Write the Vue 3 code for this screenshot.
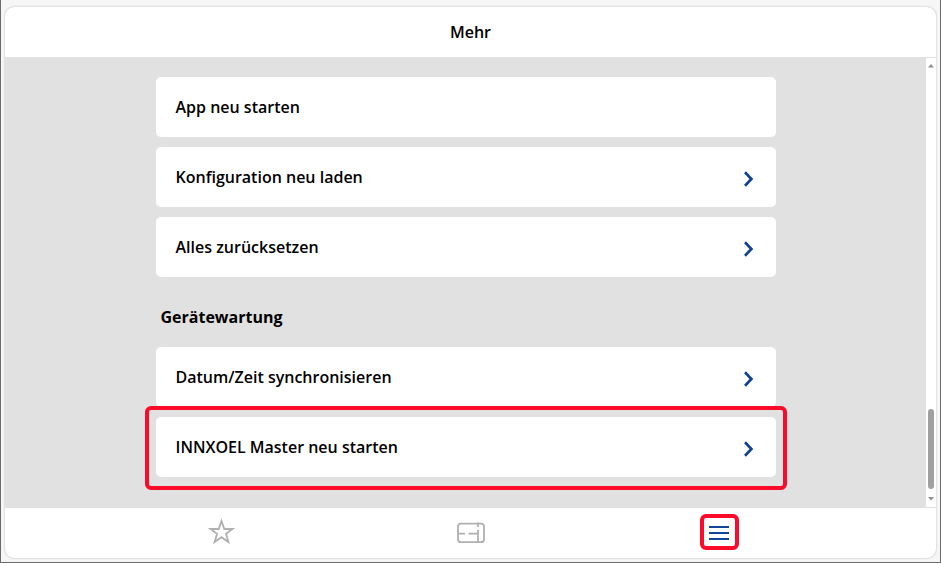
<script setup>
import { ref } from "vue";

const activeTab = ref("more");

const sections = [
  {
    title: "",
    items: [
      { id: "restart-app", label: "App neu starten", arrow: false },
      { id: "reload-config", label: "Konfiguration neu laden", arrow: true },
      { id: "reset", label: "Alles zurücksetzen", arrow: true }
    ]
  },
  {
    title: "Gerätewartung",
    items: [
      { id: "sync-time", label: "Datum/Zeit synchronisieren", arrow: true },
      { id: "restart-master", label: "INNXOEL Master neu starten", arrow: true, marked: true }
    ]
  }
];
</script>

<template>
  <div class="window">
    <div class="panel">
      <header class="header">
        <h1>Mehr</h1>
      </header>

      <div class="body">
        <main class="content">
          <section v-for="section in sections" :key="section.title" class="section">
            <h2 v-if="section.title">{{ section.title }}</h2>
            <button
              v-for="item in section.items"
              :key="item.id"
              type="button"
              class="card"
              :class="{ marked: item.marked }"
            >
              <span>{{ item.label }}</span>
              <svg v-if="item.arrow" class="chevron" width="12" height="16" viewBox="0 0 12 16">
                <path d="M1 1.3L7.4 8L1 14.7" />
              </svg>
            </button>
          </section>
        </main>

        <div class="scrollbar">
          <svg width="6" height="4" viewBox="0 0 6 4"><path d="M0 3.5L3 0L6 3.5Z" /></svg>
          <div class="track">
            <div class="thumb"></div>
          </div>
          <svg width="6" height="4" viewBox="0 0 6 4"><path d="M0 0L3 3.5L6 0Z" /></svg>
        </div>
      </div>

      <nav class="tabs">
        <button type="button" class="tab" aria-label="Favoriten" @click="activeTab = 'favorites'">
          <svg width="28" height="28" viewBox="0 0 28 28">
            <path d="M14.5 3L17.3 11H25.4L19 15.8L21.4 24L14.5 19.2L7.6 24L10 15.8L3.6 11H11.7Z" />
          </svg>
        </button>
        <button type="button" class="tab" aria-label="Räume" @click="activeTab = 'rooms'">
          <svg width="30" height="28" viewBox="0 0 30 28">
            <rect x="3" y="5.6" width="26" height="18.6" rx="3" />
            <path d="M3 15.6H10M13.5 15.6H23M23 12V24M23 4.6V9" />
          </svg>
        </button>
        <button
          type="button"
          class="tab marked"
          :class="{ active: activeTab === 'more' }"
          aria-label="Mehr"
          @click="activeTab = 'more'"
        >
          <svg width="24" height="20" viewBox="0 0 24 20">
            <path d="M1 5H21M1 11H21M1 17H21" />
          </svg>
        </button>
      </nav>
    </div>
  </div>
</template>

<style>
body {
  margin: 0;
}
</style>

<style scoped>
.window {
  box-sizing: border-box;
  min-height: 100vh;
  display: flex;
  padding: 7px 4px 4px;
  border: 1px solid #6b6b6b;
  border-top: none;
  background: #f6f6f6;
  font-family: "Open Sans", "Noto Sans", sans-serif;
  font-size: 16px;
  color: #000;
}

.panel {
  flex: 1;
  display: flex;
  flex-direction: column;
  overflow: hidden;
  border-radius: 9px;
  background: #fff;
  box-shadow: 0 0 2px rgba(0, 0, 0, 0.3);
}

.header {
  display: flex;
  align-items: center;
  justify-content: center;
  height: 50px;
}

.header h1 {
  margin: 0;
  font-size: 16px;
  font-weight: 600;
}

.body {
  flex: 1;
  display: flex;
  background: #e1e1e1;
}

.content {
  flex: 1;
  display: flex;
  flex-direction: column;
  align-items: center;
  gap: 10px;
  padding: 20px;
}

.section {
  display: flex;
  flex-direction: column;
  gap: 10px;
  width: 100%;
  max-width: 620px;
}

.section h2 {
  margin: 0;
  padding: 10px 5px 0;
  font-size: 16px;
  font-weight: 700;
  line-height: 40px;
}

.card {
  position: relative;
  display: flex;
  align-items: center;
  justify-content: space-between;
  height: 60px;
  padding: 0 20px;
  border: none;
  border-radius: 5px;
  background: #fff;
  color: #000;
  font-family: inherit;
  font-size: 16px;
  font-weight: 600;
  text-align: left;
  cursor: pointer;
}

.chevron {
  margin-top: 4px;
  fill: none;
  stroke: #0f4496;
  stroke-width: 2.7;
}

.card.marked::after {
  content: "";
  position: absolute;
  inset: -11px -11px -13px;
  border: 4px solid #fb0a2a;
  border-radius: 6px;
}

.scrollbar {
  display: flex;
  flex-direction: column;
  align-items: center;
  width: 10px;
  padding: 6px 0;
  border-top: 1px solid #e1e1e1;
  border-bottom: 1px solid #e1e1e1;
  box-sizing: border-box;
  background: #fff;
}

.scrollbar svg {
  fill: #8f8f8f;
}

.track {
  flex: 1;
  display: flex;
  align-items: flex-end;
  padding-bottom: 8px;
}

.thumb {
  width: 6px;
  height: 80px;
  border-radius: 3px;
  background: #a0a0a0;
}

.tabs {
  display: flex;
  justify-content: space-around;
  align-items: center;
  width: 100%;
  max-width: 748px;
  height: 48px;
  margin: 0 auto;
  padding-bottom: 2px;
}

.tab {
  display: flex;
  align-items: center;
  justify-content: center;
  box-sizing: border-box;
  width: 39px;
  height: 36px;
  padding: 0;
  border: none;
  background: none;
  cursor: pointer;
}

.tab svg {
  fill: none;
  stroke: #b0b0b0;
  stroke-width: 1.8;
}

.tab.active svg {
  stroke: #0f4496;
  stroke-width: 2;
}

.tab.marked {
  border: 4px solid #fb0a2a;
  border-radius: 6px;
}
</style>
